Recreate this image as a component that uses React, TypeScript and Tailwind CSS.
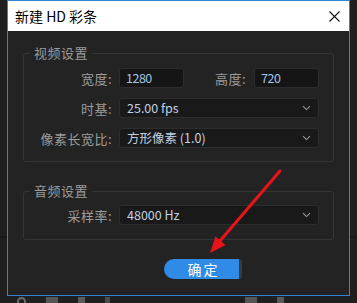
import React from "react";

const font = { fontFamily: '"Noto Sans CJK SC", "Noto Sans", sans-serif' };

function Chevron() {
  return (
    <svg width="9" height="6" viewBox="0 0 9 6" className="shrink-0">
      <path d="M1 1.2 L4.5 4.6 L8 1.2" fill="none" stroke="#9a9a9a" strokeWidth="1.1" />
    </svg>
  );
}

function Select({ value }: { value: string }) {
  return (
    <div className="flex h-[20px] flex-1 items-center justify-between rounded-[3px] border border-[#2d2d2d] bg-[#191919] pl-[7px] pr-[7px]">
      <span className="text-[12.5px] leading-none text-[#c3d1e0]">{value}</span>
      <Chevron />
    </div>
  );
}

function NumInput({ value }: { value: string }) {
  return (
    <div className="flex h-[20px] w-[65px] items-center rounded-[3px] border border-[#2d2d2d] bg-[#151515] pl-[6px]">
      <span className="text-[12.5px] leading-none tracking-[-0.5px] text-[#a2c4ea]">{value}</span>
    </div>
  );
}

function Label({ children }: { children: React.ReactNode }) {
  return (
    <span className="text-right text-[13px] leading-none tracking-[0.5px] text-[#9c9c9c]">{children}</span>
  );
}

export default function App() {
  return (
    <div className="relative h-[303px] w-[357px] overflow-hidden bg-[#1f1f1f]" style={font}>
      {/* background strip line behind the dialog */}
      <div className="absolute left-0 top-[236px] h-[2px] w-[357px] bg-[#171717]" />

      <div className="relative ml-[7px] flex h-[296px] w-[343px] flex-col border border-[#2e86d4] bg-[#232323]">
        {/* title bar */}
        <div className="flex h-[30px] items-center justify-between bg-white pl-[7px] pr-[9px]">
          <span className="text-[14px] leading-none text-black">新建 HD 彩条</span>
          <svg width="11" height="11" viewBox="0 0 11 11">
            <path d="M0.5 0.5 L10.5 10.5 M10.5 0.5 L0.5 10.5" stroke="#111" strokeWidth="1.1" />
          </svg>
        </div>

        {/* video group */}
        <fieldset className="mx-[15px] mt-[13px] rounded-[3px] border border-[#353535] pb-[13px] pr-[14px]">
          <legend className="ml-[6px] px-[4px] text-[13px] leading-[18px] tracking-[0.5px] text-[#9c9c9c]">视频设置</legend>
          <div className="mt-[6px] grid grid-cols-[88px_1fr] items-center gap-x-[7px] gap-y-[10px]">
            <Label>宽度:</Label>
            <div className="flex items-center">
              <NumInput value="1280" />
              <div className="flex-1" />
              <Label>高度:</Label>
              <div className="w-[8px]" />
              <NumInput value="720" />
            </div>
            <Label>时基:</Label>
            <Select value="25.00 fps" />
            <Label>像素长宽比:</Label>
            <Select value="方形像素 (1.0)" />
          </div>
        </fieldset>

        {/* audio group */}
        <fieldset className="mx-[15px] mt-[20px] rounded-[3px] border border-[#353535] pb-[14px] pr-[14px]">
          <legend className="ml-[6px] px-[4px] text-[13px] leading-[18px] tracking-[0.5px] text-[#9c9c9c]">音频设置</legend>
          <div className="mt-[5px] grid grid-cols-[88px_1fr] items-center gap-x-[7px]">
            <Label>采样率:</Label>
            <Select value="48000 Hz" />
          </div>
        </fieldset>

        {/* button */}
        <div className="ml-[156px] mt-[19px] flex">
          <div className="flex h-[20px] w-[75px] items-center justify-center rounded-l-full rounded-r-[3px] bg-[#2f8be6] pl-[4px]">
            <span className="text-[14px] leading-none tracking-[2px] text-white">确定</span>
          </div>
          <div className="h-[20px] w-[3px] rounded-r-[4px] bg-[#3a3a3a]" />
        </div>
      </div>

      {/* bottom background icons peeking below the dialog */}
      <div className="flex items-start gap-[20px] pl-[17px] pt-[1px]">
        <div className="h-[10px] w-[9px] rounded-full border-2 border-[#6a6a6a]" />
        <div className="h-[8px] w-[12px] bg-[#555]" />
        <div className="h-[8px] w-[7px] bg-[#5a5a5a]" />
        <div className="h-[6px] w-[5px] bg-[#4a4a4a]" />
        <div className="ml-[115px] h-[8px] w-[12px] bg-[#555]" />
        <div className="h-[8px] w-[7px] bg-[#5a5a5a]" />
      </div>

      {/* red annotation arrow */}
      <svg className="pointer-events-none absolute left-0 top-0" width="357" height="303" viewBox="0 0 357 303">
        <line x1="280" y1="171" x2="219" y2="242" stroke="#e8141a" strokeWidth="3" strokeLinecap="round" />
        <polygon points="210,253 215.5,236.5 225.5,245" fill="#e8141a" />
      </svg>
    </div>
  );
}
